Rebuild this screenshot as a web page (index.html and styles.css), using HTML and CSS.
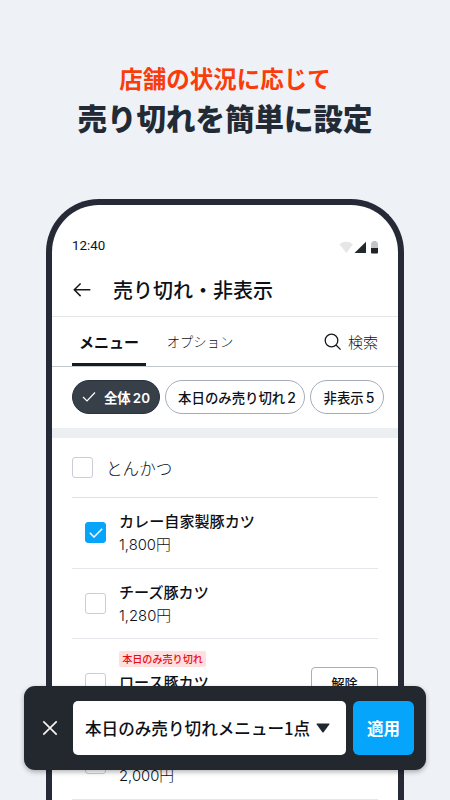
FILE: index.html
```html
<!DOCTYPE html>
<html lang="ja">
<head>
    <meta charset="UTF-8">
    <title>売り切れ・非表示</title>
    <link rel="stylesheet" href="styles.css">
</head>
<body>
    <header class="headline">
        <p class="headline-sub">店舗の状況に応じて</p>
        <h1>売り切れを簡単に設定</h1>
    </header>

    <main class="phone">
        <div class="status-bar">
            <span class="time">12:40</span>
            <svg class="status-icons" width="40" height="14" viewBox="0 0 40 14">
                <path d="M1.5 4.2Q8 -0.5 15 4.2L8.3 13Z" fill="#e6e6e6"/>
                <path d="M28 1.8V13H16.5Z" fill="#22292d"/>
                <path d="M34.5 1H38.5V2.5H40V8H33V2.5H34.5Z" fill="#c4c4c4"/>
                <path d="M33 8H40V12.5Q40 13.5 39 13.5H34Q33 13.5 33 12.5Z" fill="#1d2327"/>
            </svg>
        </div>

        <div class="title-bar">
            <svg width="20" height="16" viewBox="0 0 20 16">
                <path d="M18.3 7.8H2.3M8.6 1.5L2.3 7.8L8.6 14.1" fill="none" stroke="#15191e" stroke-width="1.5"/>
            </svg>
            <h2>売り切れ・非表示</h2>
        </div>

        <nav class="tabs">
            <span class="tab active">メニュー</span>
            <span class="tab">オプション</span>
            <span class="search">
                <svg width="18" height="18" viewBox="0 0 18 18">
                    <path d="M13.8 7.5A6.3 6.3 0 1 1 1.2 7.5A6.3 6.3 0 1 1 13.8 7.5M12 12L16.6 16.6" fill="none" stroke="#15191e" stroke-width="1.3"/>
                </svg>
                検索
            </span>
        </nav>

        <div class="chips">
            <span class="chip chip-all selected">
                <svg width="14" height="12" viewBox="0 0 14 12">
                    <path d="M1 6L5 10L13 1.5" fill="none" stroke="#fff" stroke-width="1.2"/>
                </svg>
                <span>全体 <b>20</b></span>
            </span>
            <span class="chip chip-today"><span>本日のみ売り切れ <b>2</b></span></span>
            <span class="chip chip-hidden"><span>非表示 <b>5</b></span></span>
        </div>

        <div class="divider"></div>

        <section class="list">
            <div class="category">
                <span class="checkbox"></span>
                <span>とんかつ</span>
            </div>
            <div class="item">
                <span class="checkbox checked">
                    <svg width="14" height="10" viewBox="0 0 14 10">
                        <path d="M0.8 4.8L5 9L13.2 0.8" fill="none" stroke="#fff" stroke-width="1.5"/>
                    </svg>
                </span>
                <div class="item-text">
                    <p class="name">カレー自家製豚カツ</p>
                    <p class="price">1,800円</p>
                </div>
            </div>
            <div class="item">
                <span class="checkbox"></span>
                <div class="item-text">
                    <p class="name">チーズ豚カツ</p>
                    <p class="price">1,280円</p>
                </div>
            </div>
            <div class="item item-soldout">
                <span class="checkbox"></span>
                <div class="item-text">
                    <span class="tag">本日のみ売り切れ</span>
                    <p class="name">ロース豚カツ</p>
                    <p class="price">1,500円</p>
                </div>
                <span class="release">解除</span>
            </div>
            <div class="item">
                <span class="checkbox"></span>
                <div class="item-text">
                    <p class="name">ヒレ豚カツ</p>
                    <p class="price">2,000円</p>
                </div>
            </div>
        </section>
    </main>

    <div class="action-bar">
        <svg class="close" width="16" height="16" viewBox="0 0 16 16">
            <path d="M1.3 1.3L14.7 14.7M14.7 1.3L1.3 14.7" fill="none" stroke="#f5f3ef" stroke-width="1.7"/>
        </svg>
        <div class="select">
            <span>本日のみ売り切れメニュー1点</span>
            <svg width="14" height="10" viewBox="0 0 14 10">
                <path d="M1.2 0.5H12.8Q14 0.5 13.3 1.5L7.8 9Q7 10 6.2 9L0.7 1.5Q0 0.5 1.2 0.5Z" fill="#22272f"/>
            </svg>
        </div>
        <div class="apply">適用</div>
    </div>
</body>
</html>
```

FILE: styles.css
```css
* {
    box-sizing: border-box;
    margin: 0;
    padding: 0;
}

body {
    height: 800px;
    background-color: #eef1f6;
    color: #0d1117;
    font-family: "Noto Sans CJK JP", sans-serif;
    overflow: hidden;
    white-space: nowrap;
}

svg {
    display: block;
    flex-shrink: 0;
}

.headline {
    height: 199px;
    padding-top: 61px;
    text-align: center;
}

.headline-sub {
    color: #fa3c0a;
    font-size: 23.5px;
    font-weight: 700;
    line-height: 35px;
}

.headline h1 {
    color: #212a35;
    font-size: 29.5px;
    font-weight: 900;
    line-height: 42px;
}

.phone {
    width: 358px;
    height: 601px;
    margin-left: 46px;
    background-color: #fff;
    border: 6px solid #262a37;
    border-bottom: none;
    border-radius: 53px 53px 0 0;
    overflow: hidden;
}

.status-bar {
    display: flex;
    justify-content: space-between;
    height: 58px;
    padding: 35px 20px 0;
}

.time {
    font-family: Roboto, sans-serif;
    font-size: 13.3px;
    line-height: 12px;
}

.title-bar {
    display: flex;
    align-items: center;
    gap: 21px;
    height: 54px;
    padding-left: 20px;
    border-bottom: 1px solid #e3e7e9;
}

.title-bar h2 {
    font-size: 20px;
    font-weight: 500;
}

.tabs {
    display: flex;
    height: 50px;
    padding: 0 20px;
    border-bottom: 1px solid #c3c8cd;
    line-height: 50px;
}

.tab {
    width: 74px;
    font-size: 13.3px;
    font-weight: 300;
    text-align: center;
}

.tab.active {
    margin-right: 17px;
    border-bottom: 3px solid #171d1f;
    font-size: 15px;
    font-weight: 700;
}

.search {
    display: flex;
    align-items: center;
    gap: 6px;
    margin-left: auto;
    font-size: 15px;
    font-weight: 300;
}

.chips {
    display: flex;
    gap: 5px;
    height: 61px;
    padding: 13px 0 0 20px;
}

.chip {
    display: flex;
    align-items: center;
    justify-content: center;
    height: 34px;
    border: 1px solid #a3adb9;
    border-radius: 17px;
    font-size: 13.4px;
    font-weight: 500;
    word-spacing: -1px;
}

.chip b {
    font-family: Inter, sans-serif;
    font-weight: 500;
}

.chip-all {
    gap: 8px;
    width: 88px;
    background-color: #373f49;
    border-color: #2a323e;
    color: #fff;
    font-weight: 700;
}

.chip-all b {
    font-weight: 600;
}

.chip-today {
    width: 140px;
    padding-left: 4px;
}

.chip-hidden {
    width: 74px;
    padding-left: 4px;
}

.chip-today b,
.chip-hidden b {
    font-size: 14px;
}

.divider {
    height: 10px;
    background-color: #ebeff1;
}

.list {
    padding: 0 20px;
}

.category {
    display: flex;
    align-items: center;
    gap: 13px;
    height: 60px;
    border-bottom: 1px solid #dfe2e6;
    font-size: 16.6px;
    font-weight: 300;
}

.checkbox {
    display: flex;
    align-items: center;
    justify-content: center;
    flex-shrink: 0;
    width: 21px;
    height: 21px;
    border: 1px solid #c9ced6;
    border-radius: 3px;
}

.checkbox.checked {
    background-color: #06a4fa;
    border-color: #06a4fa;
}

.item {
    display: flex;
    align-items: center;
    gap: 13px;
    height: 70.5px;
    padding-left: 13px;
    border-bottom: 1px solid #e4e6ec;
}

.item-text {
    padding-top: 1px;
}

.item-soldout {
    height: 90px;
}

.name {
    font-size: 15.1px;
    font-weight: 500;
    line-height: 23px;
}

.price {
    padding-top: 1px;
    font-family: Inter, "Noto Sans CJK JP", sans-serif;
    font-size: 14.8px;
    font-weight: 300;
    line-height: 24px;
}

.tag {
    display: block;
    width: 87px;
    height: 16px;
    margin-bottom: 3px;
    background-color: #ffdfdf;
    border-radius: 2px;
    color: #e80c12;
    font-size: 10.1px;
    font-weight: 500;
    line-height: 16px;
    text-align: center;
}

.release {
    width: 67px;
    height: 34px;
    margin-left: auto;
    border: 1px solid #a7afb9;
    border-radius: 4px;
    font-size: 13.3px;
    font-weight: 500;
    line-height: 32px;
    text-align: center;
}

/* floats over the phone */
.action-bar {
    position: absolute;
    left: 24px;
    top: 686px;
    display: flex;
    align-items: center;
    width: 402px;
    height: 84px;
    padding: 0 12px 0 18px;
    background-color: #23282f;
    border-radius: 11px;
    box-shadow: 0 2px 5px rgba(0, 0, 0, .3);
}

.select {
    display: flex;
    align-items: center;
    gap: 6px;
    width: 273px;
    height: 54px;
    margin: 0 7px 0 15px;
    padding-left: 12px;
    background-color: #fff;
    border-radius: 5px;
    font-size: 16.6px;
    font-weight: 500;
}

.apply {
    width: 61px;
    height: 54px;
    background-color: #05a5fb;
    border-radius: 6px;
    color: #fff;
    font-size: 16.5px;
    font-weight: 700;
    line-height: 54px;
    text-align: center;
}
```
